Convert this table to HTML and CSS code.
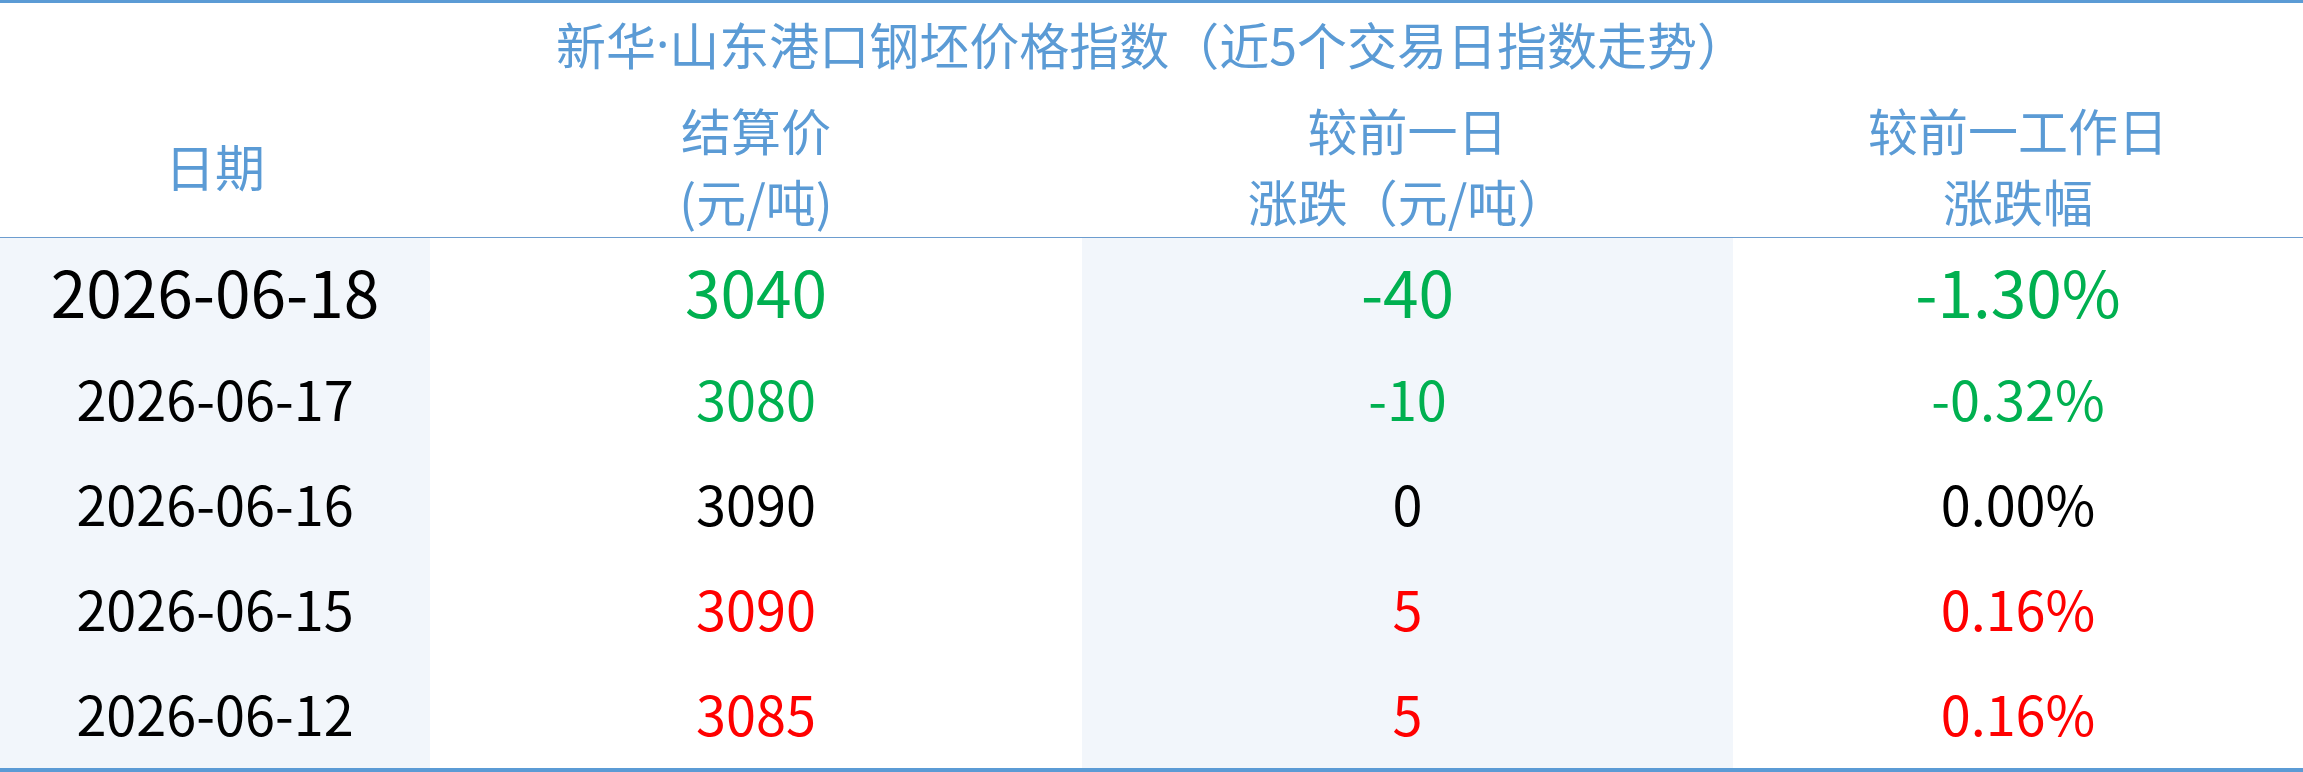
FILE: index.html
```html
<!DOCTYPE html>
<html lang="zh-CN">
<head>
<meta charset="utf-8">
<title>新华·山东港口钢坯价格指数</title>
<link rel="stylesheet" href="styles.css">
</head>
<body>
<div class="sheet">
  <div class="title">新华<span class="dot">·</span>山东港口钢坯价格指数（近5个交易日指数走势）</div>

  <div class="head">日期</div>
  <div class="head"><span>结算价</span><span>(元/吨)</span></div>
  <div class="head"><span>较前一日</span><span>涨跌（元/吨）</span></div>
  <div class="head"><span>较前一工作日</span><span>涨跌幅</span></div>

  <div class="cell shade big">2026-06-18</div>
  <div class="cell big down">3040</div>
  <div class="cell shade big down">-40</div>
  <div class="cell big down">-1.30%</div>

  <div class="cell shade">2026-06-17</div>
  <div class="cell down">3080</div>
  <div class="cell shade down">-10</div>
  <div class="cell down">-0.32%</div>

  <div class="cell shade">2026-06-16</div>
  <div class="cell">3090</div>
  <div class="cell shade">0</div>
  <div class="cell">0.00%</div>

  <div class="cell shade">2026-06-15</div>
  <div class="cell up">3090</div>
  <div class="cell shade up">5</div>
  <div class="cell up">0.16%</div>

  <div class="cell shade">2026-06-12</div>
  <div class="cell up">3085</div>
  <div class="cell shade up">5</div>
  <div class="cell up">0.16%</div>
</div>
</body>
</html>
```

FILE: styles.css
```css
html, body {
  margin: 0;
  padding: 0;
  background: #ffffff;
}

body {
  font-family: "Noto Sans CJK SC", "Noto Sans", sans-serif;
  width: 2303px;
}

.sheet {
  display: grid;
  grid-template-columns: 430px 652px 651px 1fr;
  border-top: 3px solid #5b9bd5;
  border-bottom: 4px solid #5b9bd5;
}

.title {
  grid-column: 1 / -1;
  height: 80px;
  padding-bottom: 12px;
  display: flex;
  align-items: center;
  justify-content: center;
  color: #5b9bd5;
  font-size: 50px;
  line-height: 1;
}

.dot {
  font-family: "Noto Sans", sans-serif;
}

.head {
  height: 140px;
  padding-bottom: 2px;
  border-bottom: 1px solid #6d9dcf;
  display: flex;
  flex-direction: column;
  align-items: center;
  justify-content: center;
  color: #5b9bd5;
  font-size: 50px;
  line-height: 71px;
}

.cell {
  height: 99px;
  padding-bottom: 6px;
  display: flex;
  align-items: center;
  justify-content: center;
  font-size: 54px;
  color: #000000;
  line-height: 1;
}

.cell.big {
  height: 104px;
  font-size: 64px;
}

.shade {
  background: #f2f6fb;
}

.down {
  color: #00b050;
}

.up {
  color: #ff0000;
}
```
